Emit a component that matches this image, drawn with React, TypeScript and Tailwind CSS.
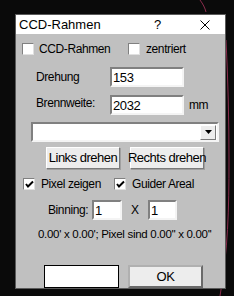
import React from "react";

const font = { fontFamily: '"Liberation Sans", Arial, sans-serif' };

function Check({ checked }: { checked?: boolean }) {
  return (
    <span className="w-[12px] h-[12px] bg-white border border-t-[#808080] border-l-[#808080] border-r-[#e0e0e0] border-b-[#e0e0e0] flex items-center justify-center shrink-0">
      {checked && (
        <svg width="9" height="9" viewBox="0 0 9 9">
          <path d="M1 4 L3 6.5 L8 1.5" fill="none" stroke="#000" strokeWidth="2" />
        </svg>
      )}
    </span>
  );
}

function Field({ value, className }: { value: string; className: string }) {
  return (
    <div
      className={`bg-white border-2 border-t-[#808080] border-l-[#808080] border-r-[#f4f4f4] border-b-[#f4f4f4] flex items-center pl-[1px] text-[13px] leading-none shrink-0 ${className}`}
    >
      {value}
    </div>
  );
}

function Btn({ label, className }: { label: string; className: string }) {
  return (
    <div
      className={`bg-[#ededed] border border-t-white border-l-white border-r-[#7a7a7a] border-b-[#7a7a7a] shadow-[1px_1px_0_#a0a0a0] flex items-center justify-center text-[13px] whitespace-nowrap tracking-[-0.5px] ${className}`}
    >
      {label}
    </div>
  );
}

export default function App() {
  return (
    <div className="relative w-[234px] h-[296px] bg-[#0a0a0a] overflow-hidden" style={font}>
      <svg className="absolute inset-0" width="234" height="296" viewBox="0 0 234 296">
        <path d="M200 0 C203 4 205 8 206 12" fill="none" stroke="#8a2c4c" strokeWidth="1" />
        <path d="M226 40 C228 80 229 120 229 160 C229 210 228 250 220 296" fill="none" stroke="#8a2c4c" strokeWidth="1" />
      </svg>
      <div className="absolute left-[15px] top-[14px] w-[211px] h-[275px] border border-[#5a5a5a] bg-[#c0c0c0] flex flex-col text-black whitespace-nowrap text-[12px] tracking-[-0.4px]">
        <div className="h-[19px] bg-white flex items-center text-[13px] tracking-normal shrink-0">
          <span className="ml-[3px] w-[135px]">CCD-Rahmen</span>
          <span className="w-[46px]">?</span>
          <svg width="10" height="10" viewBox="0 0 10 10">
            <path d="M0.5 0.5 L9.5 9.5 M9.5 0.5 L0.5 9.5" stroke="#000" strokeWidth="1" />
          </svg>
        </div>

        <div className="mt-[9px] h-[12px] flex items-center">
          <span className="ml-[6px]"><Check /></span>
          <span className="ml-[5px] w-[89px]">CCD-Rahmen</span>
          <Check />
          <span className="ml-[6px]">zentriert</span>
        </div>

        <div className="mt-[12px] h-[20px] flex items-center">
          <span className="ml-[20px] w-[74px]">Drehung</span>
          <Field value="153" className="w-[74px] h-[20px]" />
        </div>

        <div className="mt-[8px] h-[20px] flex items-center">
          <span className="ml-[20px] w-[74px] -mt-[4px]">Brennweite:</span>
          <Field value="2032" className="w-[74px] h-[20px]" />
          <span className="ml-[5px]">mm</span>
        </div>

        <div className="mt-[7px] ml-[15px] w-[188px] h-[20px] bg-white border-2 border-t-[#808080] border-l-[#808080] border-r-[#f4f4f4] border-b-[#f4f4f4] flex justify-end items-center pr-[1px]">
          <div className="w-[16px] h-[15px] bg-[#ededed] border border-t-white border-l-white border-r-[#7a7a7a] border-b-[#7a7a7a] flex items-center justify-center">
            <svg width="7" height="4" viewBox="0 0 7 4">
              <path d="M0 0 H7 L3.5 4 Z" fill="#000" />
            </svg>
          </div>
        </div>

        <div className="mt-[5px] h-[22px] flex">
          <Btn label="Links drehen" className="ml-[30px] w-[74px] h-[22px]" />
          <Btn label="Rechts drehen" className="ml-[10px] w-[74px] h-[22px]" />
        </div>

        <div className="mt-[9px] h-[12px] flex items-center">
          <span className="ml-[7px]"><Check checked /></span>
          <span className="ml-[6px] w-[73px]">Pixel zeigen</span>
          <Check checked />
          <span className="ml-[6px]">Guider Areal</span>
        </div>

        <div className="mt-[10px] h-[20px] flex items-center">
          <span className="ml-[32px] w-[44px]">Binning:</span>
          <Field value="1" className="w-[30px] h-[20px]" />
          <span className="ml-[9px] w-[17px]">X</span>
          <Field value="1" className="w-[29px] h-[20px]" />
        </div>

        <div className="mt-[8px] ml-[22px] text-[11.5px] leading-[12px] tracking-[-0.3px]">
          0.00' x 0.00'; Pixel sind 0.00'' x 0.00''
        </div>

        <div className="mt-[25px] h-[23px] flex">
          <div className="ml-[28px] w-[75px] h-[23px] bg-white border border-black" />
          <div className="ml-[9px] w-[75px] h-[23px] bg-[#ededed] border-2 border-t-[#b0b0b0] border-l-[#b0b0b0] border-r-[#6a6a6a] border-b-[#6a6a6a] flex items-center justify-center text-[13px]">
            OK
          </div>
        </div>
      </div>
    </div>
  );
}
